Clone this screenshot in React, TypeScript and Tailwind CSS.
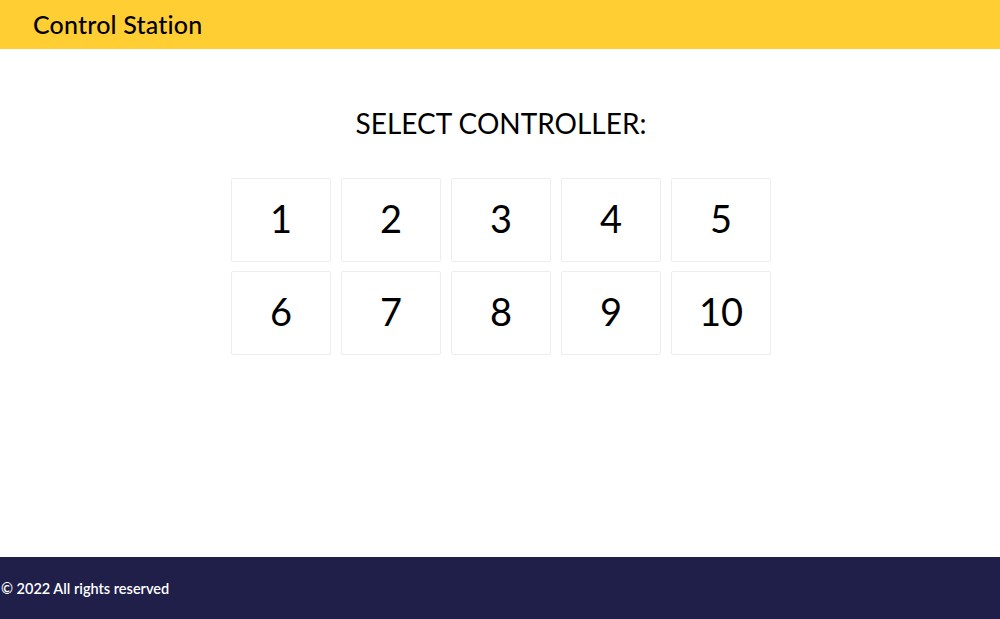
const controllers = [1, 2, 3, 4, 5, 6, 7, 8, 9, 10];

export default function App() {
  return (
    <div className="flex h-[619px] flex-col bg-white font-['Lato',sans-serif] text-black">
      <header className="flex h-[49px] shrink-0 items-center bg-[#ffce32] px-[33px]">
        <h1 className="text-[25px] leading-none font-medium tracking-[0.2px]">Control Station</h1>
      </header>

      <main className="flex flex-1 flex-col items-center pt-[58px] pl-[2px]">
        <h2 className="text-[28px] leading-[32px] font-normal">SELECT CONTROLLER:</h2>
        <div className="mt-[39px] grid grid-cols-5 gap-[9px_10px]">
          {controllers.map((n) => (
            <button
              key={n}
              className="flex h-[84px] w-[100px] items-center justify-center rounded-[2px] border border-[#ededed] bg-white pb-[3px] text-[38px] font-normal"
            >
              {n}
            </button>
          ))}
        </div>
      </main>

      <footer className="flex h-[62px] shrink-0 items-center bg-[#1f1f4a] px-px pt-[2px] text-white">
        <p className="text-[14.5px] font-semibold">© 2022 All rights reserved</p>
      </footer>
    </div>
  );
}
